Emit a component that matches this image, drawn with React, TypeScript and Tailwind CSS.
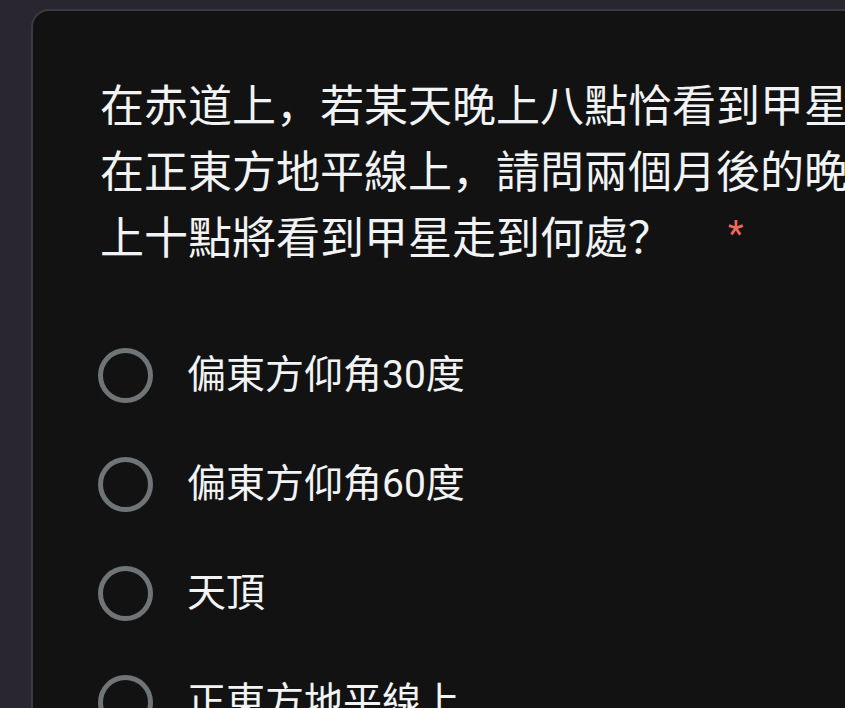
import React from "react";

const options = ["偏東方仰角30度", "偏東方仰角60度", "天頂", "正東方地平線上"];

const Radio = () => (
  <div className="h-[55px] w-[55px] shrink-0 rounded-full border-[5px] border-[#6f7477]" />
);

export default function App() {
  return (
    <div
      className="h-[708px] w-[845px] overflow-hidden bg-[#29262f] pl-[31px] pt-[9px]"
      style={{ fontFamily: 'Roboto, "Noto Sans CJK SC", sans-serif' }}
    >
      <div className="min-h-[820px] w-[900px] rounded-[18px] border-2 border-[#3b3a40] bg-[#121212] pl-[67px] pt-[63px]">
        <p className="w-[760px] text-[44px] leading-[66px] text-[#f1f3f4]">
          在赤道上，若某天晚上八點恰看到甲星在正東方地平線上，請問兩個月後的晚上十點將看到甲星走到何處？
          <span className="relative top-[-8px] ml-[56px] text-[36px] text-[#f0695d]">*</span>
        </p>

        <div className="-ml-[2px] mt-[46px] flex flex-col">
          {options.map((o) => (
            <div key={o} className="flex h-[109px] items-center gap-[34px]">
              <Radio />
              <span className="text-[39px] text-[#f1f3f4]">{o}</span>
            </div>
          ))}
        </div>
      </div>
    </div>
  );
}
